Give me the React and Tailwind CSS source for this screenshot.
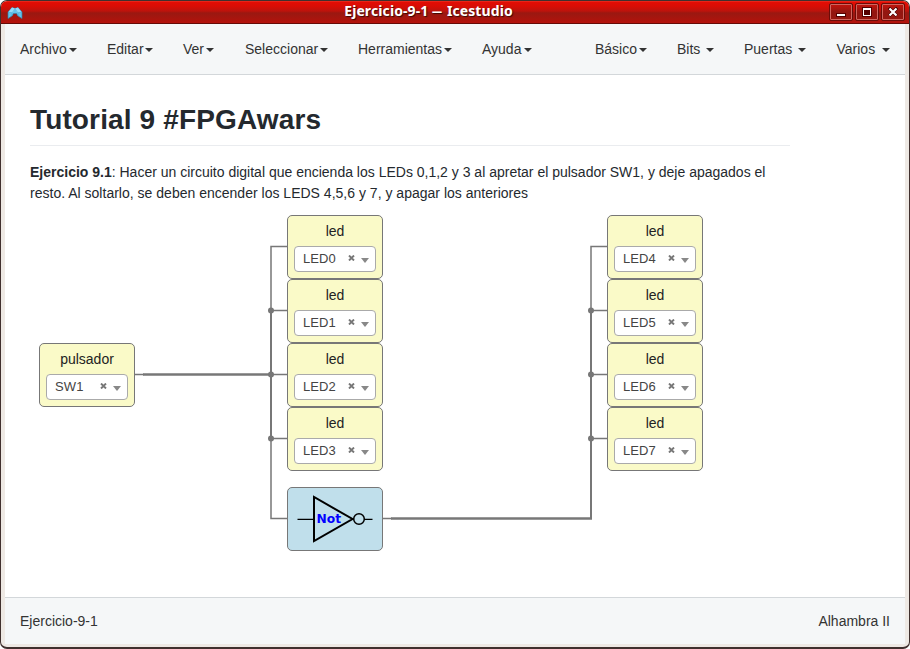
import React from "react";

const leftMenus = [
  { label: "Archivo", width: "w-[87px]" },
  { label: "Editar", width: "w-[76px]", gap: "ml-[1.5px]" },
  { label: "Ver", width: "w-[62px]" },
  { label: "Seleccionar", width: "w-[113px]" },
  { label: "Herramientas", width: "w-[124px]" },
  { label: "Ayuda", width: "w-[80px]" },
];

const rightMenus = [
  { label: "Básico", width: "w-[82px]", gap: "ml-[2px]" },
  { label: "Bits", width: "w-[67px]", gap: "ml-[6px]" },
  { label: "Puertas", width: "w-[92.5px]", gap: "ml-[6px]" },
  { label: "Varios", width: "w-[68.5px]", gap: "ml-[6.5px]" },
];

const blocks = [
  { title: "pulsador", pin: "SW1", place: "left-[34px] top-[268px]" },
  { title: "led", pin: "LED0", place: "left-[282px] top-[140px]" },
  { title: "led", pin: "LED1", place: "left-[282px] top-[204px]" },
  { title: "led", pin: "LED2", place: "left-[282px] top-[268px]" },
  { title: "led", pin: "LED3", place: "left-[282px] top-[332px]" },
  { title: "led", pin: "LED4", place: "left-[602px] top-[140px]" },
  { title: "led", pin: "LED5", place: "left-[602px] top-[204px]" },
  { title: "led", pin: "LED6", place: "left-[602px] top-[268px]" },
  { title: "led", pin: "LED7", place: "left-[602px] top-[332px]" },
];

function Menu({ label, width, gap = "ml-[2.3px]" }) {
  return (
    <div className={`flex shrink-0 items-center whitespace-nowrap ${width}`}>
      <span>{label}</span>
      <svg className={`mt-[2px] h-1 w-2 ${gap}`} viewBox="0 0 8 4">
        <path d="M0 0H8L4 4Z" fill="#333" />
      </svg>
    </div>
  );
}

function WindowButton({ children }) {
  return (
    <div className="flex h-[18px] w-[24px] items-center justify-center rounded-[2px] border border-[#6b0c08] bg-[#941009]">
      <div className="flex h-4 w-[22px] items-center justify-center rounded-[1px] border border-[#d0665f] bg-gradient-to-b from-[#c1130c] via-[#921610] to-[#981710]">
        <svg className="shrink-0" width="14" height="14" viewBox="0 0 14 14" shapeRendering="crispEdges">
          {children}
        </svg>
      </div>
    </div>
  );
}

function PinBlock({ title, pin, place }) {
  return (
    <div className={`absolute flex h-16 w-24 flex-col items-center rounded-[5px] border border-[#777] bg-[#fafac8] ${place}`}>
      <div className="mt-[5px] h-5 text-sm leading-5 text-[#222]">{title}</div>
      <div className="mt-[5px] flex h-[26px] w-[82px] items-center rounded-[4px] border border-[#aaa] bg-white pl-2 text-[13px] text-[#444]">
        <span className="w-[45px] leading-6 tracking-[0.1px]">{pin}</span>
        <svg className="mt-[-2px] h-[6px] w-[7px]" viewBox="0 0 7 6">
          <path d="M1 .5L6 5.5M6 .5L1 5.5" stroke="#777" strokeWidth="1.9" />
        </svg>
        <svg className="ml-[6px] mt-[3px] h-[5px] w-2" viewBox="0 0 8 5">
          <path d="M0 0H8L4 5Z" fill="#888" />
        </svg>
      </div>
    </div>
  );
}

function Wires() {
  return (
    <svg className="absolute left-0 top-0" width="900" height="522" viewBox="5 75 900 522" fill="none" stroke="#777">
      <path d="M287 246.5H271V518.5H287" strokeWidth="1.5" />
      <path d="M271 310V439" strokeWidth="2" />
      <path d="M271 310.5H287M271 374.5H287M271 438.5H287M135 374.5H144" strokeWidth="1.5" />
      <path d="M143 374.5H271" strokeWidth="2.6" />
      <path d="M607 246.5H591V518" strokeWidth="1.5" />
      <path d="M591 310V518.5" strokeWidth="2" />
      <path d="M591 310.5H607M591 374.5H607M591 438.5H607M383 518.5H392" strokeWidth="1.5" />
      <path d="M391 518.5H592" strokeWidth="2.4" />
      <g fill="#777" stroke="none">
        <circle cx="271" cy="310.5" r="3" />
        <circle cx="271" cy="374.5" r="3" />
        <circle cx="271" cy="438.5" r="3" />
        <circle cx="591" cy="310.5" r="3" />
        <circle cx="591" cy="374.5" r="3" />
        <circle cx="591" cy="438.5" r="3" />
      </g>
    </svg>
  );
}

function NotGate() {
  return (
    <div className="absolute left-[282px] top-[412px] h-16 w-24 rounded-[5px] border border-[#777] bg-[#c0dfeb]">
      <svg width="94" height="62" viewBox="288 488 94 62" fill="none" stroke="#000">
        <path d="M297.5 519.3H314M364 519.3H372.5" strokeWidth="1.3" />
        <path d="M314 497V541L352.5 519Z" strokeWidth="2" />
        <circle cx="359" cy="519" r="5.3" strokeWidth="1.5" />
        <text x="316.5" y="523" fill="#0000ff" stroke="none" textLength="24.5" lengthAdjust="spacingAndGlyphs" className="font-['DejaVu_Sans',sans-serif] text-[12px] font-bold">
          Not
        </text>
      </svg>
    </div>
  );
}

export default function App() {
  return (
    <div className="h-[649px] w-[910px] overflow-hidden bg-white font-['Liberation_Sans',Arial,sans-serif] text-sm text-[#333]">
      <div className="flex h-[649px] flex-col overflow-hidden rounded-[7px] border border-b-2 border-[#40302e] bg-[#eee9e4]">
        <header className="flex h-[23px] shrink-0 items-center border-b border-[#650b07] bg-[linear-gradient(#ef3b2b_0px,#e30d04_1px,#d90d05_5px,#bd130c_10px,#9a1811_12px,#a4160f_16px,#b5120b_22px)] pl-[6px] pr-[4px]">
          <svg width="16" height="14" viewBox="0 0 16 14" className="mt-[2px] shrink-0">
            <path d="M1 6L5 1.5L8 2.5L11 1.5L15 6V12.5L11 10L9.5 7.5H6.5L5 10L1 12.5Z" fill="#62c3ec" stroke="#347fa3" strokeWidth=".7" />
            <path d="M5 1.5L8 2.5L6 6.5L1.5 6ZM11 1.5L14.5 6L10 6.5L8 2.5Z" fill="#94dcf8" />
            <path d="M1.5 6L5 7V10M14.5 6L11 7V10M5 7L8 2.5L11 7" fill="none" stroke="#4ba7d0" strokeWidth=".5" />
          </svg>
          <h1 className="ml-[321px] mt-[-2px] w-[169px] whitespace-nowrap text-center font-['Noto_Sans','Open_Sans',sans-serif] text-[14px] font-bold leading-5 tracking-[0.1px] text-white [text-shadow:1px_1px_1px_#3d0703]">
            Ejercicio-9-1 <span className="inline-block w-[11px] origin-left scale-x-[0.72]">—</span> Icestudio
          </h1>
          <div className="ml-auto flex gap-[2px]">
            <WindowButton><path d="M2 8H12V12H2Z" fill="#500" /><path d="M3 9H11V11H3Z" fill="#fff" /></WindowButton>
            <WindowButton><path d="M2 2H12V12H2Z" fill="#500" /><path d="M3 3H11V11H3ZM4 5V10H10V5Z" fill="#fff" fillRule="evenodd" /></WindowButton>
            <WindowButton>
              <path d="M3 3L11 11M11 3L3 11" stroke="#500" strokeWidth="4" />
              <path d="M3.5 3.5L10.5 10.5M10.5 3.5L3.5 10.5" stroke="#fff" strokeWidth="2.2" shapeRendering="auto" />
            </WindowButton>
          </div>
        </header>

        <div className="mx-1 flex h-[620px] shrink-0 flex-col bg-white">
          <nav className="flex h-[51px] shrink-0 items-center justify-between border-b border-[#d3d7da] bg-[#f5f7f8] pl-[15px]">
            <div className="flex">{leftMenus.map((menu) => <Menu key={menu.label} {...menu} />)}</div>
            <div className="flex">{rightMenus.map((menu) => <Menu key={menu.label} {...menu} />)}</div>
          </nav>

          <main className="relative h-[522px] shrink-0 px-[25px] text-[#24292e]">
            <h2 className="h-[71px] w-[760px] border-b border-[#eaecef] pt-[27px] text-[28px] font-bold leading-[35px] tracking-[0.14px]">
              Tutorial 9 #FPGAwars
            </h2>
            <div className="mt-4 w-[760px] whitespace-nowrap leading-[21px]">
              <p className="flex">
                <strong>Ejercicio 9.1</strong>
                <span>: Hacer un circuito digital que encienda los LEDs 0,1,2 y 3 al apretar el pulsador SW1, y deje apagados el</span>
              </p>
              <p className="tracking-[0.01px]">resto. Al soltarlo, se deben encender los LEDS 4,5,6 y 7, y apagar los anteriores</p>
            </div>
            <Wires />
            {blocks.map((block) => <PinBlock key={block.pin} {...block} />)}
            <NotGate />
          </main>

          <footer className="flex h-[47px] shrink-0 items-center justify-between border-t border-[#d3d7da] bg-[#f5f7f8] px-[15px]">
            <span>Ejercicio-9-1</span>
            <span>Alhambra II</span>
          </footer>
        </div>
      </div>
    </div>
  );
}
